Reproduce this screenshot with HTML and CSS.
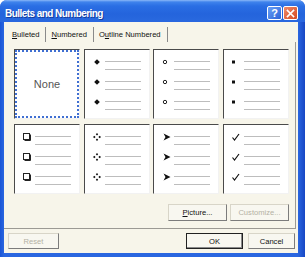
FILE: index.html
```html
<!DOCTYPE html>
<html>
<head>
<meta charset="utf-8">
<link rel="stylesheet" href="styles.css">
</head>
<body>
<div class="window">
  <div class="titlebar">
    <span class="title">Bullets and Numbering</span>
    <div class="caption-buttons">
      <span class="cbtn help">?</span>
      <span class="cbtn close"><svg width="9" height="9" viewBox="0 0 9 9"><path d="M1.5 1.5 L7.5 7.5 M7.5 1.5 L1.5 7.5" stroke="#fff" stroke-width="1.7" stroke-linecap="square"/></svg></span>
    </div>
  </div>
  <div class="client">
    <div class="tabs">
      <span class="tab active"><u>B</u>ulleted</span>
      <span class="tab"><u>N</u>umbered</span>
      <span class="tab">O<u>u</u>tline Numbered</span>
    </div>
    <div class="panel">
      <div class="grid">
        <div class="cell selected"><span class="none">None</span></div>

        <div class="cell">
          <div class="item"><span class="bullet"><svg width="8" height="8" viewBox="0 0 8 8"><polygon points="4,1.2 6.8,4 4,6.8 1.2,4" fill="#111"/></svg></span><span class="lines"><i></i><i></i></span></div>
          <div class="item"><span class="bullet"><svg width="8" height="8" viewBox="0 0 8 8"><polygon points="4,1.2 6.8,4 4,6.8 1.2,4" fill="#111"/></svg></span><span class="lines"><i></i><i></i></span></div>
          <div class="item"><span class="bullet"><svg width="8" height="8" viewBox="0 0 8 8"><polygon points="4,1.2 6.8,4 4,6.8 1.2,4" fill="#111"/></svg></span><span class="lines"><i></i><i></i></span></div>
        </div>

        <div class="cell">
          <div class="item"><span class="bullet"><svg width="8" height="8" viewBox="0 0 8 8"><circle cx="3" cy="4" r="1.7" fill="none" stroke="#222" stroke-width="1"/></svg></span><span class="lines"><i></i><i></i></span></div>
          <div class="item"><span class="bullet"><svg width="8" height="8" viewBox="0 0 8 8"><circle cx="3" cy="4" r="1.7" fill="none" stroke="#222" stroke-width="1"/></svg></span><span class="lines"><i></i><i></i></span></div>
          <div class="item"><span class="bullet"><svg width="8" height="8" viewBox="0 0 8 8"><circle cx="3" cy="4" r="1.7" fill="none" stroke="#222" stroke-width="1"/></svg></span><span class="lines"><i></i><i></i></span></div>
        </div>

        <div class="cell">
          <div class="item"><span class="bullet"><svg width="8" height="8" viewBox="0 0 8 8"><rect x="0" y="2.5" width="3" height="3" fill="#111"/></svg></span><span class="lines"><i></i><i></i></span></div>
          <div class="item"><span class="bullet"><svg width="8" height="8" viewBox="0 0 8 8"><rect x="0" y="2.5" width="3" height="3" fill="#111"/></svg></span><span class="lines"><i></i><i></i></span></div>
          <div class="item"><span class="bullet"><svg width="8" height="8" viewBox="0 0 8 8"><rect x="0" y="2.5" width="3" height="3" fill="#111"/></svg></span><span class="lines"><i></i><i></i></span></div>
        </div>

        <div class="cell">
          <div class="item"><span class="bullet"><svg width="8" height="8" viewBox="0 0 8 8"><rect x="0.5" y="0.5" width="6" height="6" fill="#fff" stroke="#222" stroke-width="1"/><polyline points="7.5,1.5 7.5,7.5 1.5,7.5" fill="none" stroke="#222" stroke-width="1"/></svg></span><span class="lines"><i></i><i></i></span></div>
          <div class="item"><span class="bullet"><svg width="8" height="8" viewBox="0 0 8 8"><rect x="0.5" y="0.5" width="6" height="6" fill="#fff" stroke="#222" stroke-width="1"/><polyline points="7.5,1.5 7.5,7.5 1.5,7.5" fill="none" stroke="#222" stroke-width="1"/></svg></span><span class="lines"><i></i><i></i></span></div>
          <div class="item"><span class="bullet"><svg width="8" height="8" viewBox="0 0 8 8"><rect x="0.5" y="0.5" width="6" height="6" fill="#fff" stroke="#222" stroke-width="1"/><polyline points="7.5,1.5 7.5,7.5 1.5,7.5" fill="none" stroke="#222" stroke-width="1"/></svg></span><span class="lines"><i></i><i></i></span></div>
        </div>

        <div class="cell">
          <div class="item"><span class="bullet"><svg width="8" height="8" viewBox="0 0 8 8"><g fill="#111"><polygon points="4,0 5.2,1.3 4,2.6 2.8,1.3"/><polygon points="4,5.4 5.2,6.7 4,8 2.8,6.7"/><polygon points="0,4 1.3,2.8 2.6,4 1.3,5.2"/><polygon points="5.4,4 6.7,2.8 8,4 6.7,5.2"/></g></svg></span><span class="lines"><i></i><i></i></span></div>
          <div class="item"><span class="bullet"><svg width="8" height="8" viewBox="0 0 8 8"><g fill="#111"><polygon points="4,0 5.2,1.3 4,2.6 2.8,1.3"/><polygon points="4,5.4 5.2,6.7 4,8 2.8,6.7"/><polygon points="0,4 1.3,2.8 2.6,4 1.3,5.2"/><polygon points="5.4,4 6.7,2.8 8,4 6.7,5.2"/></g></svg></span><span class="lines"><i></i><i></i></span></div>
          <div class="item"><span class="bullet"><svg width="8" height="8" viewBox="0 0 8 8"><g fill="#111"><polygon points="4,0 5.2,1.3 4,2.6 2.8,1.3"/><polygon points="4,5.4 5.2,6.7 4,8 2.8,6.7"/><polygon points="0,4 1.3,2.8 2.6,4 1.3,5.2"/><polygon points="5.4,4 6.7,2.8 8,4 6.7,5.2"/></g></svg></span><span class="lines"><i></i><i></i></span></div>
        </div>

        <div class="cell">
          <div class="item"><span class="bullet"><svg class="over" width="8" height="8" viewBox="0 0 8 8"><polygon points="1.5,0.5 8.5,4 1.5,7.5 3.5,4" fill="#111"/></svg></span><span class="lines"><i></i><i></i></span></div>
          <div class="item"><span class="bullet"><svg class="over" width="8" height="8" viewBox="0 0 8 8"><polygon points="1.5,0.5 8.5,4 1.5,7.5 3.5,4" fill="#111"/></svg></span><span class="lines"><i></i><i></i></span></div>
          <div class="item"><span class="bullet"><svg class="over" width="8" height="8" viewBox="0 0 8 8"><polygon points="1.5,0.5 8.5,4 1.5,7.5 3.5,4" fill="#111"/></svg></span><span class="lines"><i></i><i></i></span></div>
        </div>

        <div class="cell">
          <div class="item"><span class="bullet"><svg width="8" height="8" viewBox="0 0 8 8"><path d="M0.5 4.5 L2.5 7 L7 1" fill="none" stroke="#111" stroke-width="1.2"/></svg></span><span class="lines"><i></i><i></i></span></div>
          <div class="item"><span class="bullet"><svg width="8" height="8" viewBox="0 0 8 8"><path d="M0.5 4.5 L2.5 7 L7 1" fill="none" stroke="#111" stroke-width="1.2"/></svg></span><span class="lines"><i></i><i></i></span></div>
          <div class="item"><span class="bullet"><svg width="8" height="8" viewBox="0 0 8 8"><path d="M0.5 4.5 L2.5 7 L7 1" fill="none" stroke="#111" stroke-width="1.2"/></svg></span><span class="lines"><i></i><i></i></span></div>
        </div>
      </div>
      <div class="panel-buttons">
        <button class="btn picture"><u>P</u>icture...</button>
        <button class="btn customize" disabled>Customize...</button>
      </div>
    </div>
    <div class="footer">
      <button class="btn reset" disabled>Reset</button>
      <span class="spacer"></span>
      <button class="btn ok">OK</button>
      <button class="btn cancel">Cancel</button>
    </div>
  </div>
</div>
</body>
</html>
```

FILE: styles.css
```css
* { box-sizing: border-box; margin: 0; padding: 0; }
html, body { width: 305px; height: 257px; overflow: hidden; background: #fff; }
body {
  font-family: "Liberation Sans", Arial, sans-serif;
  font-size: 7.6px;
  color: #000;
}
.window {
  width: 305px;
  height: 257px;
  display: flex;
  flex-direction: column;
  background: linear-gradient(90deg, #1a55d6 0, #2a66e0 4px, #2a66e0 298px, #1747c4 305px);
  border-radius: 7px 7px 0 0;
  overflow: hidden;
}
.titlebar {
  height: 22px;
  flex: none;
  display: flex;
  align-items: center;
  justify-content: space-between;
  padding: 4px 7px 0 5px;
  background: linear-gradient(180deg, #8ab8f8 0, #3f83ec 2px, #2a6ee4 6px, #2464dc 14px, #2868de 20px, #2a66e0 22px);
}
.title {
  color: #fff;
  font-weight: bold;
  font-size: 10px;
  letter-spacing: -0.55px;
  text-shadow: 1px 1px 0 #163c9c;
}
.caption-buttons { display: flex; gap: 1px; }
.cbtn {
  width: 15px;
  height: 14px;
  border: 1px solid #fff;
  border-radius: 2px;
  display: flex;
  align-items: center;
  justify-content: center;
  color: #fff;
  font-weight: bold;
  font-size: 11px;
}
.help { background: linear-gradient(135deg, #6aa0f6, #2a62d8); }
.close { background: linear-gradient(135deg, #ef8a6a, #d44a22); }

.client {
  flex: 1;
  margin: 0 7px 4px 4px;
  background: #f7f5ea;
  display: flex;
  flex-direction: column;
  padding-bottom: 4px;
}
.tabs {
  display: flex;
  height: 15px;
  margin-top: 5px;
  padding-left: 3px;
  flex: none;
}
.tab {
  padding: 0 6px 0 5px;
  line-height: 15px;
  border-right: 1px solid #8a8a8a;
  color: #111;
}
.panel {
  height: 187px;
  flex: none;
  margin-right: 2px;
  border-right: 1px solid #9c9a94;
  border-bottom: 1px solid #9c9a94;
  padding: 7px 0 7px 10px;
  display: flex;
  flex-direction: column;
}
.grid {
  display: grid;
  grid-template-columns: repeat(4, 66px);
  grid-auto-rows: 70px;
  column-gap: 3.5px;
  row-gap: 5px;
}
.cell {
  background: #fff;
  border: 1px solid;
  border-color: #4a4a4a #f2f2f2 #f2f2f2 #4a4a4a;
  padding-top: 8px;
}
.cell.selected {
  display: flex;
  align-items: center;
  justify-content: center;
  padding-top: 0;
  outline: 2px dotted #3f6fd2;
  outline-offset: -3px;
}
.none {
  font-size: 11px;
  color: #555;
}
.item {
  height: 20px;
  display: flex;
}
.bullet {
  width: 20px;
  flex: none;
  padding-left: 8px;
  display: flex;
  align-items: flex-start;
}
.bullet svg { overflow: visible; }
.lines {
  display: flex;
  flex-direction: column;
  gap: 7px;
  padding-top: 3px;
}
.lines i {
  display: block;
  width: 36px;
  height: 1px;
  background: #bdbdbd;
}
.panel-buttons {
  display: flex;
  justify-content: flex-end;
  gap: 3px;
  margin-top: 10px;
  padding-right: 6px;
}
.btn {
  font-family: "Liberation Sans", Arial, sans-serif;
  font-size: 7.6px;
  color: #111;
  background: #f8f7f0;
  border: 1px solid;
  border-color: #d8d5c8 #7c7c7c #7c7c7c #d8d5c8;
  height: 17px;
  display: flex;
  align-items: center;
  justify-content: center;
}
.btn:disabled { color: #b4b1a4; }
.picture, .customize { width: 59px; }
.footer {
  display: flex;
  margin-top: 4px;
  padding: 0 3px 0 4px;
}
.footer .btn { height: 16px; }
.reset { width: 51px; }
.spacer { flex: 1; }
.ok {
  width: 57px;
  margin-right: 5px;
  border-color: #222;
  box-shadow: inset -1px -1px 0 #8a8a8a;
}
.cancel { width: 47px; }
```
